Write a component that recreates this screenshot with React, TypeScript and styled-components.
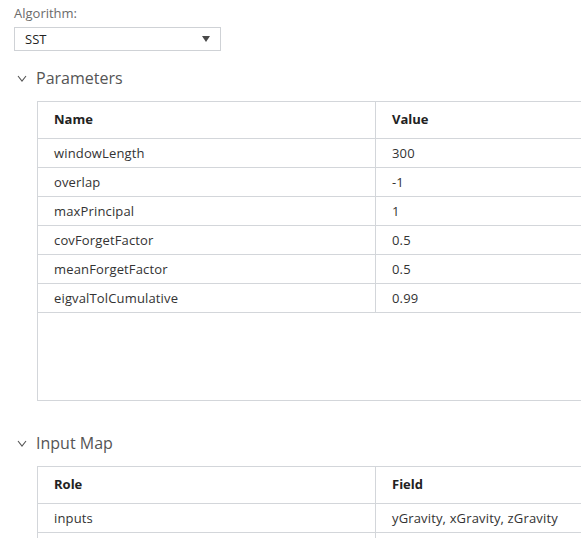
import React from "react";
import styled, { createGlobalStyle } from "styled-components";

const Global = createGlobalStyle`
  html, body { margin: 0; padding: 0; background: #fff; overflow: hidden; }
  body { font-family: "Open Sans", "Liberation Sans", sans-serif; color: #333; }
`;

const Page = styled.div`
  width: 581px;
  height: 538px;
  overflow: hidden;
  padding: 5px 0 0 14px;
  box-sizing: border-box;
`;

const Label = styled.div`
  font-size: 13px;
  line-height: 16px;
  color: #6b6b6b;
  height: 22px;
`;

const Select = styled.div`
  width: 207px;
  height: 24px;
  box-sizing: border-box;
  border: 1px solid #cfd2d6;
  display: flex;
  align-items: center;
  justify-content: space-between;
  padding: 0 10px 0 10px;
  font-size: 13px;
  color: #222;
`;

const Arrow = styled.span`
  width: 0;
  height: 0;
  border-left: 4px solid transparent;
  border-right: 4px solid transparent;
  border-top: 6px solid #4a4a4a;
`;

const Section = styled.div<{ $top: number }>`
  margin-top: ${(p) => p.$top}px;
`;

const SectionHeader = styled.div`
  display: flex;
  align-items: center;
  height: 24px;
  gap: 9px;
  padding-left: 3px;
  font-size: 16px;
  color: #555;
  font-weight: 400;
`;

const Table = styled.div<{ $height?: number }>`
  margin-top: 11px;
  margin-left: 23px;
  width: 600px;
  border: 1px solid #d3d6da;
  border-right: none;
  box-sizing: border-box;
  ${(p) => (p.$height ? `height: ${p.$height}px;` : "")}
`;

const Row = styled.div<{ $head?: boolean }>`
  display: grid;
  grid-template-columns: 338px 1fr;
  height: ${(p) => (p.$head ? 36 : 28)}px;
  border-bottom: 1px solid #d3d6da;
  font-size: 13px;
  font-weight: ${(p) => (p.$head ? 700 : 400)};
  color: ${(p) => (p.$head ? "#222" : "#333")};
  letter-spacing: ${(p) => (p.$head ? 0 : 0.15)}px;
`;

const Cell = styled.div<{ $first?: boolean; $head?: boolean }>`
  display: flex;
  align-items: center;
  padding-left: 16px;
  padding-bottom: ${(p) => (p.$head ? 3 : 1)}px;
  ${(p) => (p.$first ? "border-right: 1px solid #d3d6da;" : "")}
`;

const Chevron = () => (
  <svg width="10" height="7" viewBox="0 0 10 7">
    <path d="M1 1 L5 6 L9 1" fill="none" stroke="#555" strokeWidth="1.1" />
  </svg>
);

const params: [string, string][] = [
  ["windowLength", "300"],
  ["overlap", "-1"],
  ["maxPrincipal", "1"],
  ["covForgetFactor", "0.5"],
  ["meanForgetFactor", "0.5"],
  ["eigvalTolCumulative", "0.99"],
];

export default function App() {
  return (
    <Page>
      <Global />
      <Label>Algorithm:</Label>
      <Select>
        <span>SST</span>
        <Arrow />
      </Select>
      <Section $top={15}>
        <SectionHeader>
          <Chevron />
          <span>Parameters</span>
        </SectionHeader>
        <Table $height={300}>
          <Row $head>
            <Cell $first $head>Name</Cell>
            <Cell $head>Value</Cell>
          </Row>
          {params.map(([n, v]) => (
            <Row key={n}>
              <Cell $first>{n}</Cell>
              <Cell>{v}</Cell>
            </Row>
          ))}
        </Table>
      </Section>
      <Section $top={30}>
        <SectionHeader>
          <Chevron />
          <span>Input Map</span>
        </SectionHeader>
        <Table>
          <Row $head>
            <Cell $first $head>Role</Cell>
            <Cell $head>Field</Cell>
          </Row>
          <Row>
            <Cell $first>inputs</Cell>
            <Cell>yGravity, xGravity, zGravity</Cell>
          </Row>
          <Row>
            <Cell $first></Cell>
            <Cell></Cell>
          </Row>
        </Table>
      </Section>
    </Page>
  );
}
